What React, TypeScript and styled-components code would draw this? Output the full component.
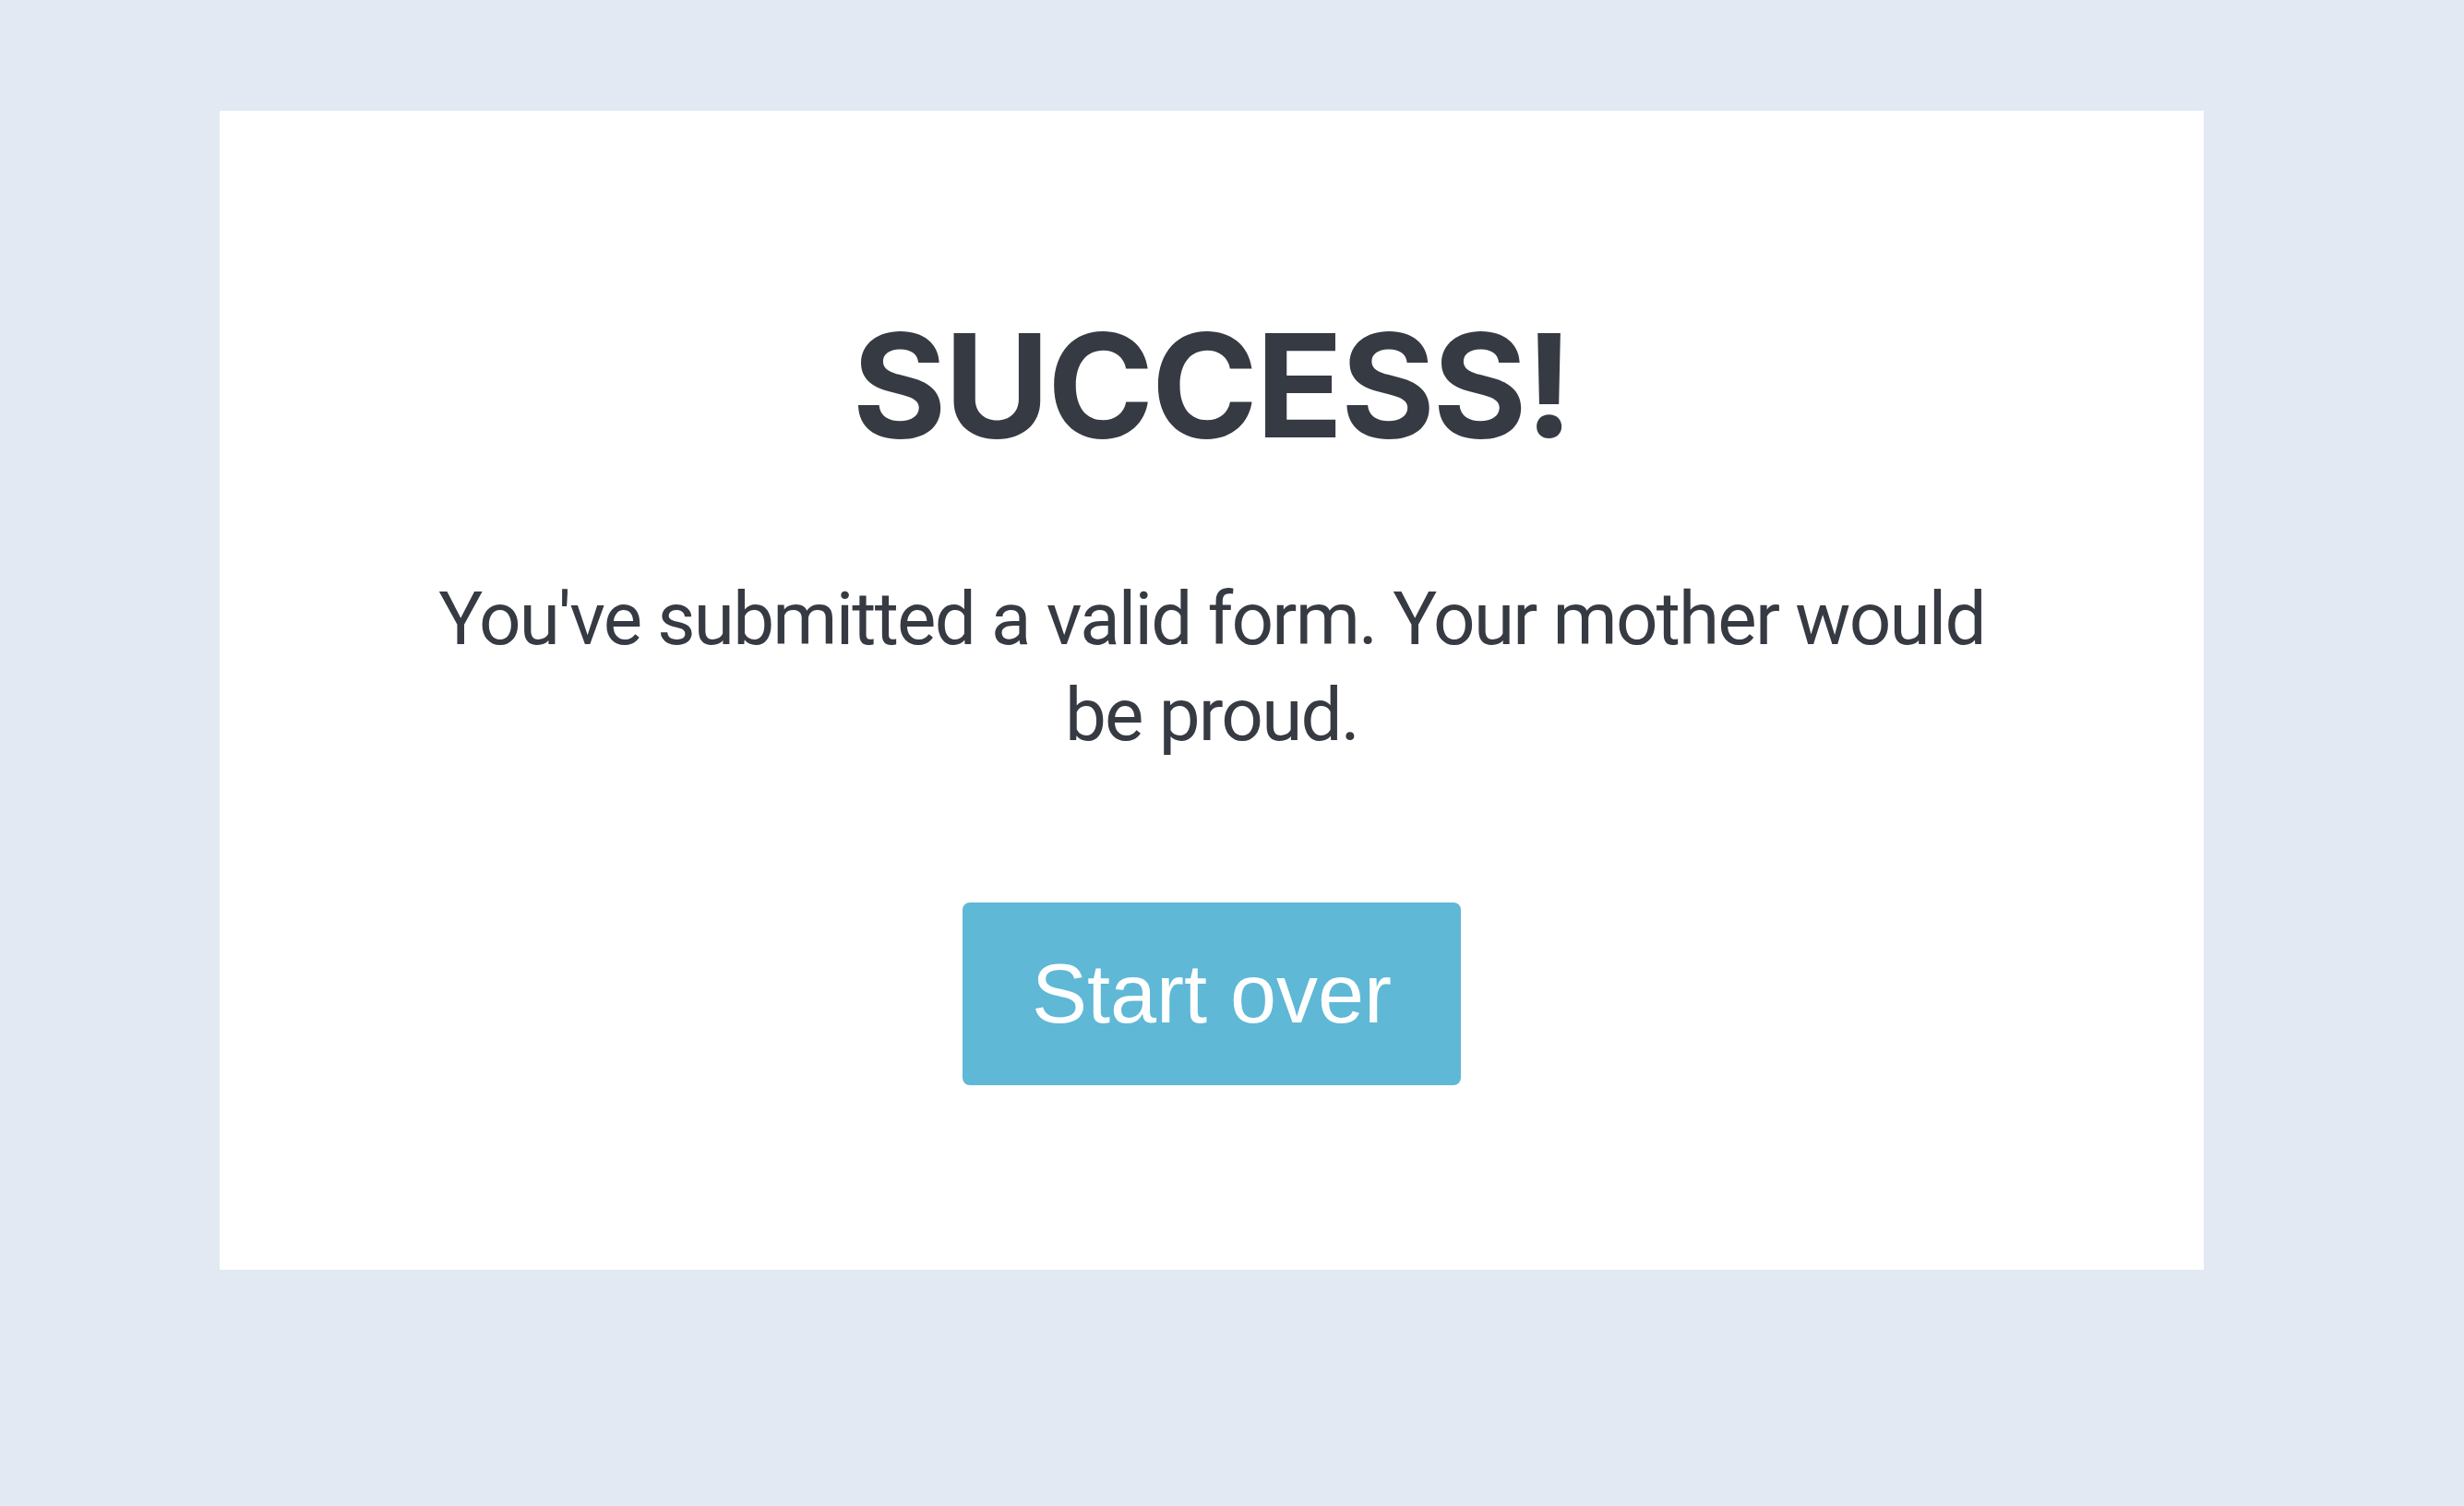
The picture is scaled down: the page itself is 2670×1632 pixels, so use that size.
import React from "react";
import styled, { createGlobalStyle } from "styled-components";

const GlobalStyle = createGlobalStyle`
  html, body {
    margin: 0;
    padding: 0;
    background: #e2e9f3;
  }
  body {
    font-family: Inter, "Liberation Sans", sans-serif;
    color: #363a42;
  }
`;

const Page = styled.div`
  min-height: 1632px;
  padding: 120px 282px 0 238px;
  box-sizing: border-box;
`;

const Card = styled.section`
  background: #ffffff;
  height: 1256px;
  box-sizing: border-box;
  padding-top: 202px;
  display: flex;
  flex-direction: column;
  align-items: center;
`;

const Title = styled.h1`
  margin: 0;
  font-family: Inter, "Liberation Sans", sans-serif;
  font-weight: 700;
  font-size: 156px;
  line-height: 192px;
  letter-spacing: -2.5px;
  color: #363a42;
`;

const Message = styled.p`
  margin: 105px 0 0;
  max-width: 1720px;
  text-align: center;
  font-family: Roboto, "Liberation Sans", sans-serif;
  font-size: 80px;
  line-height: 104px;
  letter-spacing: -1.8px;
  color: #363a42;
`;

const Button = styled.button`
  margin-top: 151px;
  width: 540px;
  height: 198px;
  border: none;
  border-radius: 8px;
  background: #5fb8d6;
  color: #ffffff;
  font-family: "Liberation Sans", Arial, sans-serif;
  font-size: 90px;
  display: flex;
  align-items: center;
  justify-content: center;
  cursor: pointer;
`;

export default function App() {
  return (
    <>
      <GlobalStyle />
      <Page>
        <Card>
          <Title>SUCCESS!</Title>
          <Message>
            You've submitted a valid form. Your mother would be proud.
          </Message>
          <Button type="button">Start over</Button>
        </Card>
      </Page>
    </>
  );
}
